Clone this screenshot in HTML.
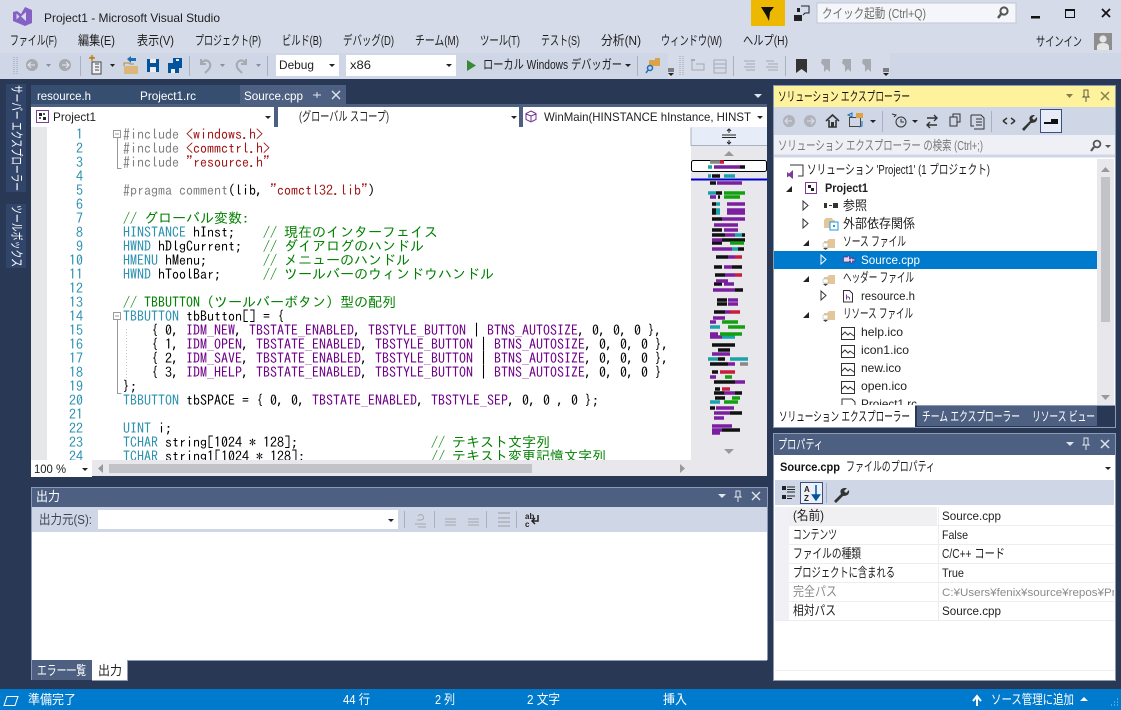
<!DOCTYPE html>
<html lang="ja"><head><meta charset="utf-8"><title>Project1 - Microsoft Visual Studio</title>
<style>
html,body{margin:0;padding:0;background:#293955;overflow:hidden}
svg{display:block}
text{white-space:pre}
.u{font-family:"Liberation Sans","Noto Sans CJK JP",sans-serif;font-size:12px;fill:#1e1e1e}
.j{font-size:13px}
.c{font-family:"IPAGothic","Liberation Mono",monospace;font-size:14px;fill:#000}
.n{fill:#2B91AF;text-anchor:end}
.t{fill:#2B91AF}.m{fill:#6F008A}.g{fill:#008000}.s{fill:#A31515}.p{fill:#808080}
.w{fill:#fff}.d{fill:#8a8f9c}
</style></head><body>
<svg width="1121" height="710" viewBox="0 0 1121 710" xmlns="http://www.w3.org/2000/svg">
<!-- chrome -->
<rect width="1121" height="710" fill="#293955"/>
<rect width="1121" height="79" fill="#D6DBE9"/>
<rect y="53" width="1121" height="26" fill="#CFD6E5"/>
<!-- VS logo -->
<path d="M25 7l7 3v13l-7 3-12-5v-9l4-1 4 3z" fill="#8661C5"/>
<path d="M16.500 13.500v6l3-3zM26 12l-5 4.500 5 4.500z" fill="#D6DBE9"/>
<text class="u" x="44" y="22" textLength="176" lengthAdjust="spacingAndGlyphs">Project1 - Microsoft Visual Studio</text>
<!-- notification -->
<rect x="751" y="0" width="34" height="26" fill="#EDB800"/>
<path d="M761 7h13l-4 5-1 9-3-6z" fill="#111"/>
<path d="M794 15h8v6h-8zM797 8h3v4h-3z" fill="#222"/><path d="M801 6h8v7h-4l-2 2" fill="none" stroke="#222"/>
<rect x="817" y="3" width="199" height="20" fill="#F4F6FA" stroke="#C0C7D6"/>
<text class="u j" x="822" y="18" textLength="104" lengthAdjust="spacingAndGlyphs" style="fill:#6d6d6d">クイック起動 (Ctrl+Q)</text>
<circle cx="1004" cy="11" r="3.6" fill="none" stroke="#555" stroke-width="2"/><path d="M1001 14l-3 4" stroke="#555" stroke-width="2.4"/>
<rect x="1031" y="16" width="9" height="2.5" fill="#111"/>
<rect x="1065.5" y="9.5" width="9" height="8" fill="none" stroke="#111"/><rect x="1065" y="9" width="10" height="2" fill="#111"/>
<path d="M1102 9l8 8M1110 9l-8 8" stroke="#111" stroke-width="1.7"/>
<!-- menu -->
<g>
<text class="u j" x="10" y="45" textLength="47" lengthAdjust="spacingAndGlyphs">ファイル(F)</text>
<text class="u j" x="78" y="45" textLength="37" lengthAdjust="spacingAndGlyphs">編集(E)</text>
<text class="u j" x="137" y="45" textLength="37" lengthAdjust="spacingAndGlyphs">表示(V)</text>
<text class="u j" x="195" y="45" textLength="66" lengthAdjust="spacingAndGlyphs">プロジェクト(P)</text>
<text class="u j" x="282" y="45" textLength="40" lengthAdjust="spacingAndGlyphs">ビルド(B)</text>
<text class="u j" x="343" y="45" textLength="51" lengthAdjust="spacingAndGlyphs">デバッグ(D)</text>
<text class="u j" x="415" y="45" textLength="44" lengthAdjust="spacingAndGlyphs">チーム(M)</text>
<text class="u j" x="480" y="45" textLength="40" lengthAdjust="spacingAndGlyphs">ツール(T)</text>
<text class="u j" x="541" y="45" textLength="39" lengthAdjust="spacingAndGlyphs">テスト(S)</text>
<text class="u j" x="601" y="45" textLength="40" lengthAdjust="spacingAndGlyphs">分析(N)</text>
<text class="u j" x="661" y="45" textLength="61" lengthAdjust="spacingAndGlyphs">ウィンドウ(W)</text>
<text class="u j" x="743" y="45" textLength="45" lengthAdjust="spacingAndGlyphs">ヘルプ(H)</text>
<text class="u j" x="1036" y="46" textLength="46" lengthAdjust="spacingAndGlyphs">サインイン</text>
</g>
<rect x="1094" y="33" width="18" height="17" fill="#8e8e8e"/><circle cx="1103" cy="39" r="3.6" fill="#e6e6e6"/><path d="M1097 50v-4q1-3 6-3t6 3v4z" fill="#e6e6e6"/>
<!-- toolbar -->
<path d="M14 57v18M17 57v18" stroke="#9aa1b3" stroke-width="1" stroke-dasharray="1 1"/>
<circle cx="32" cy="65" r="6" fill="#a6a9b0"/><path d="M35 65h-6M31 62l-3 3 3 3" fill="none" stroke="#e8eaf0"/>
<path d="M46 64h5l-2.500 3z" fill="#8b8f99"/>
<circle cx="65" cy="65" r="6" fill="#a6a9b0"/><path d="M62 65h6M66 62l3 3-3 3" fill="none" stroke="#e8eaf0"/>
<path d="M80.500 56v20" stroke="#a9b0c0"/>
<rect x="92" y="62" width="9" height="12" fill="#eef0f5" stroke="#444"/><path d="M95 64h4M95 67h4M95 70h4" stroke="#444"/><path d="M90 57l2 2 2-2M92 55v6M89 58h6" stroke="#c8811a" stroke-width="1.400"/>
<path d="M110 64h5l-2.500 3z" fill="#222"/>
<path d="M124 66h14v8h-14z" fill="#DCB67A"/><path d="M124 66v-3h5l1 1h4" fill="none" stroke="#b58a45"/><path d="M127 59l4-3v2h5v3h-5v2z" fill="#1c6fb5"/>
<path d="M147 59h12v13h-12z" fill="#00539C"/><rect x="150" y="59" width="6" height="4" fill="#eee"/><rect x="150" y="67" width="6" height="5" fill="#eee"/>
<path d="M168 63h11v10h-11z" fill="#00539C"/><path d="M173 58h9v10h-3v-5h-6z" fill="#00539C"/><rect x="171" y="69" width="4" height="4" fill="#eee"/><rect x="176" y="59" width="3" height="2" fill="#eee"/>
<path d="M189.500 56v20" stroke="#a9b0c0"/>
<path d="M201 59v5h5M201 64q3-5 7-3 4 3 1 8l-4 4" fill="none" stroke="#a6a9b0" stroke-width="2"/>
<path d="M220 64h5l-2.500 3z" fill="#8b8f99"/>
<path d="M246 59v5h-5M246 64q-3-5-7-3-4 3-1 8l4 4" fill="none" stroke="#a6a9b0" stroke-width="2"/>
<path d="M256 64h5l-2.500 3z" fill="#8b8f99"/>
<path d="M267.500 56v20" stroke="#a9b0c0"/>
<rect x="276" y="55" width="63" height="21" fill="#fff"/>
<text class="u" x="279" y="69" textLength="35" lengthAdjust="spacingAndGlyphs">Debug</text>
<path d="M329 64h6l-3 3z" fill="#222"/>
<rect x="346" y="55" width="110" height="21" fill="#fff"/>
<text class="u" x="350" y="69" textLength="21" lengthAdjust="spacingAndGlyphs">x86</text>
<path d="M446 64h6l-3 3z" fill="#222"/>
<path d="M467 60l9 5.500-9 5.500z" fill="#388A34"/>
<text class="u j" x="483" y="69" textLength="139" lengthAdjust="spacingAndGlyphs">ローカル Windows デバッガー</text>
<path d="M625 64h6l-3 3z" fill="#222"/>
<path d="M637.500 56v20" stroke="#a9b0c0"/>
<path d="M649 60h6v-2h5v8h-11z" fill="#DCA24A"/><circle cx="650" cy="68" r="2.500" fill="none" stroke="#1c6fb5" stroke-width="1.500"/><path d="M648 70l-2 3" stroke="#1c6fb5" stroke-width="1.500"/>
<rect x="668" y="53" width="222" height="26" fill="#D6DBE9"/>
<path d="M668 69h6M668 71h6" stroke="#222"/><path d="M668 73h6l-3 3z" fill="#222"/>
<path d="M680 56v20M683 56v20" stroke="#9aa1b3" stroke-dasharray="1 1"/>
<path d="M692 60v10h12v-6h-8" fill="none" stroke="#a6a9b0"/><path d="M691 60l4 0" stroke="#a6a9b0" stroke-width="2"/>
<path d="M714 60h12v13h-12zM714 64h12M714 68h12" fill="none" stroke="#a6a9b0"/>
<path d="M733.500 56v20" stroke="#a9b0c0"/>
<path d="M744 61h11M746 64h9M744 67h11M746 70h9" stroke="#a6a9b0"/>
<path d="M766 61h8M768 64h10M766 67h12M768 70h10" stroke="#a6a9b0"/>
<path d="M785.500 56v20" stroke="#a9b0c0"/>
<path d="M796 59h11v14l-5.500-4-5.500 4z" fill="#333"/>
<path d="M822 59h8v13l-3-3-3 3v-6l-3-3z" fill="#a6a9b0"/>
<path d="M843 59h8v13l-3-3-3 3v-6l-3-3z" fill="#a6a9b0"/>
<path d="M863 59h8v13l-3-3-3 3v-6l-3-3z" fill="#a6a9b0"/>
<path d="M883 69h6M883 71h6" stroke="#222"/><path d="M883 73h6l-3 3z" fill="#222"/>

<!-- left vertical tabs -->
<rect x="6" y="84" width="20" height="108" fill="#31456A"/>
<rect x="6" y="204" width="20" height="64" fill="#31456A"/>
<text class="u j w" transform="translate(12,85) rotate(90)" textLength="106" lengthAdjust="spacingAndGlyphs">サーバー エクスプローラー</text>
<text class="u j w" transform="translate(12,205) rotate(90)" textLength="62" lengthAdjust="spacingAndGlyphs">ツールボックス</text>

<!-- editor tabs -->
<rect x="31" y="85" width="209" height="19" fill="#364E6F"/>
<rect x="240" y="85" width="106" height="19" fill="#4D6082"/>
<rect x="31" y="104" width="736" height="23" fill="#4D6082"/>
<text class="u" x="37" y="100" textLength="54" lengthAdjust="spacingAndGlyphs" style="fill:#fff">resource.h</text>
<text class="u w" x="140" y="100" textLength="56" lengthAdjust="spacingAndGlyphs">Project1.rc</text>
<text class="u w" x="244" y="100" textLength="59" lengthAdjust="spacingAndGlyphs">Source.cpp</text>
<path d="M313 95h4M317 92v6M317 95h4" stroke="#dfe4ee" fill="none"/>
<path d="M332 91l8 8M340 91l-8 8" stroke="#dfe4ee" stroke-width="1.400"/>
<path d="M754 94h8l-4 4z" fill="#dfe4ee"/>
<rect x="31" y="107" width="243" height="20" fill="#fff"/>
<rect x="278" y="107" width="241" height="20" fill="#fff"/>
<rect x="523" y="107" width="244" height="20" fill="#fff"/>
<rect x="36.500" y="110.500" width="12" height="12" fill="#fff" stroke="#7d3c98"/><path d="M39 113h3v3h-3zM43 117h3v3h-3z" fill="#222"/><path d="M43 113h2v2h-2zM39 117h2v2h-2z" fill="#555"/>
<text class="u" x="53" y="121" textLength="43" lengthAdjust="spacingAndGlyphs">Project1</text>
<path d="M265 116h6l-3 3z" fill="#222"/>
<text class="u j" x="299" y="121" textLength="90" lengthAdjust="spacingAndGlyphs">(グローバル スコープ)</text>
<path d="M511 116h6l-3 3z" fill="#222"/>
<path d="M531 111l5 2.500v6l-5 2.500-5-2.500v-6z" fill="none" stroke="#6F2C91"/><path d="M526 114l5 2 5-2M531 116v5" fill="none" stroke="#6F2C91"/>
<text class="u" x="544" y="121" textLength="207" lengthAdjust="spacingAndGlyphs">WinMain(HINSTANCE hInstance, HINST</text>
<path d="M757 116h6l-3 3z" fill="#222"/>

<!-- editor -->
<rect x="31" y="127" width="660" height="333" fill="#fff"/>
<rect x="31" y="127" width="16" height="333" fill="#E6E7E8"/>
<g>
<text class="c n" x="83" y="139">1</text><text class="c n" x="83" y="153">2</text><text class="c n" x="83" y="167">3</text><text class="c n" x="83" y="181">4</text><text class="c n" x="83" y="195">5</text><text class="c n" x="83" y="209">6</text><text class="c n" x="83" y="223">7</text><text class="c n" x="83" y="237">8</text><text class="c n" x="83" y="251">9</text><text class="c n" x="83" y="265">10</text><text class="c n" x="83" y="279">11</text><text class="c n" x="83" y="293">12</text><text class="c n" x="83" y="307">13</text><text class="c n" x="83" y="321">14</text><text class="c n" x="83" y="335">15</text><text class="c n" x="83" y="349">16</text><text class="c n" x="83" y="363">17</text><text class="c n" x="83" y="377">18</text><text class="c n" x="83" y="391">19</text><text class="c n" x="83" y="405">20</text><text class="c n" x="83" y="419">21</text><text class="c n" x="83" y="433">22</text><text class="c n" x="83" y="447">23</text>
</g>
<!-- outline -->
<g fill="none" stroke="#9a9a9a">
<rect x="113.500" y="130.500" width="7" height="7" fill="#fff"/><path d="M115 134h4"/>
<path d="M117.500 138v30.500h4"/>
<rect x="113.500" y="312.500" width="7" height="7" fill="#fff"/><path d="M115 316h4"/>
<path d="M117.500 320v73.500h4"/>
</g>
<path d="M126.500 329v56" stroke="#c8c8c8" stroke-dasharray="1 2"/>
<svg x="31" y="127" width="660" height="333" viewBox="31 127 660 333">
<text class="c" x="123" y="139"><tspan class="p">#include </tspan><tspan class="s">&lt;windows.h&gt;</tspan></text>
<text class="c" x="123" y="153"><tspan class="p">#include </tspan><tspan class="s">&lt;commctrl.h&gt;</tspan></text>
<text class="c" x="123" y="167"><tspan class="p">#include </tspan><tspan class="s">"resource.h"</tspan></text>
<text class="c" x="123" y="195"><tspan class="p">#pragma comment</tspan>(lib, <tspan class="s">"comctl32.lib"</tspan>)</text>
<text class="c g" x="123" y="223">// グローバル変数:</text>
<text class="c" x="123" y="237"><tspan class="t">HINSTANCE</tspan> hInst;    <tspan class="g">// 現在のインターフェイス</tspan></text>
<text class="c" x="123" y="251"><tspan class="t">HWND</tspan> hDlgCurrent;   <tspan class="g">// ダイアログのハンドル</tspan></text>
<text class="c" x="123" y="265"><tspan class="t">HMENU</tspan> hMenu;        <tspan class="g">// メニューのハンドル</tspan></text>
<text class="c" x="123" y="279"><tspan class="t">HWND</tspan> hToolBar;      <tspan class="g">// ツールバーのウィンドウハンドル</tspan></text>
<text class="c g" x="123" y="307">// TBBUTTON（ツールバーボタン）型の配列</text>
<text class="c" x="123" y="321"><tspan class="t">TBBUTTON</tspan> tbButton[] = {</text>
<text class="c" x="123" y="335">    { 0, <tspan class="m">IDM_NEW</tspan>, <tspan class="m">TBSTATE_ENABLED</tspan>, <tspan class="m">TBSTYLE_BUTTON</tspan> | <tspan class="m">BTNS_AUTOSIZE</tspan>, 0, 0, 0 },</text>
<text class="c" x="123" y="349">    { 1, <tspan class="m">IDM_OPEN</tspan>, <tspan class="m">TBSTATE_ENABLED</tspan>, <tspan class="m">TBSTYLE_BUTTON</tspan> | <tspan class="m">BTNS_AUTOSIZE</tspan>, 0, 0, 0 },</text>
<text class="c" x="123" y="363">    { 2, <tspan class="m">IDM_SAVE</tspan>, <tspan class="m">TBSTATE_ENABLED</tspan>, <tspan class="m">TBSTYLE_BUTTON</tspan> | <tspan class="m">BTNS_AUTOSIZE</tspan>, 0, 0, 0 },</text>
<text class="c" x="123" y="377">    { 3, <tspan class="m">IDM_HELP</tspan>, <tspan class="m">TBSTATE_ENABLED</tspan>, <tspan class="m">TBSTYLE_BUTTON</tspan> | <tspan class="m">BTNS_AUTOSIZE</tspan>, 0, 0, 0 }</text>
<text class="c" x="123" y="391">};</text>
<text class="c" x="123" y="405"><tspan class="t">TBBUTTON</tspan> tbSPACE = { 0, 0, <tspan class="m">TBSTATE_ENABLED</tspan>, <tspan class="m">TBSTYLE_SEP</tspan>, 0, 0 , 0 };</text>
<text class="c" x="123" y="433"><tspan class="t">UINT</tspan> i;</text>
<text class="c" x="123" y="447"><tspan class="t">TCHAR</tspan> string[1024 * 128];                   <tspan class="g">// テキスト文字列</tspan></text>
<text class="c" x="123" y="461"><tspan class="t">TCHAR</tspan> string1[1024 * 128];                  <tspan class="g">// テキスト変更記憶文字列</tspan></text>
<text class="c n" x="83" y="461">24</text>
</svg>
<!-- hscroll -->
<rect x="31" y="460" width="736" height="16" fill="#E8E8EC"/>
<rect x="31" y="460" width="61" height="17" fill="#fff"/>
<text class="u" x="34" y="473" textLength="32" lengthAdjust="spacingAndGlyphs">100 %</text>
<path d="M82 468h6l-3 3z" fill="#222"/>
<path d="M103 464v9l-5-4.500z" fill="#999"/>
<rect x="109" y="464" width="423" height="9" fill="#C2C3C9"/>
<path d="M680 464v9l5-4.500z" fill="#999"/>
<!-- minimap -->
<rect x="691" y="127" width="76" height="349" fill="#E8E8EC"/>
<rect x="691" y="127" width="76" height="18" fill="#E6ECF8"/>
<path d="M691 127.500v18h76" fill="none" stroke="#A8B0C2"/>
<path d="M722 135h14M722 137.500h14" stroke="#222"/><path d="M729 129v4M729 140v4M727 131l2-2 2 2M727 142l2 2 2-2" fill="none" stroke="#222"/>
<path d="M724 156l5-5 5 5z" fill="#999"/><path d="M724 449l5 5 5-5z" fill="#999"/>
<rect x="691.500" y="160.500" width="75" height="11" rx="2" fill="#fff" stroke="#000"/>
<g fill="none" stroke-width="3.500">
<path stroke="#111" d="M740 167h5M712 176h8M710 183h6M716 193h6M718 197h2M712 204h4M712 210h4M712 213h4M712 219h10M712 230h10M712 235h13M742 235h3M722 240h23M712 243h10M738 249h6M716 257h12M714 267h8M732 267h10M715 275h10M714 284h8M735 290h8M717 300h10M717 304h10M714 312h11M712 345h23M718 350h12M718 359h7M710 364h18M712 372h6M714 382h21M715 389h5M714 393h11M735 393h7M715 398h10M710 408h5M730 413h12M722 430h18"/>
<path stroke="#7a1fa0" d="M714 167h26M717 183h25M710 197h6M727 204h18M727 210h18M727 213h18M722 219h23M714 225h24M724 230h14M725 235h10M712 240h10M712 249h13M725 249h7M728 257h7M724 267h8M725 275h10M716 281h12M724 284h10M713 290h22M728 300h10M728 304h10M725 312h5M713 318h12M710 322h6M710 334h8M710 337h12M712 354h18M728 364h7M710 377h6M735 382h10M724 393h11M716 408h18M714 413h16M714 418h10M712 426h20M712 430h10M712 433h8"/>
<path stroke="#1aa3a8" d="M708 167h4M708 176h3M724 176h11M708 193h8M716 204h4M716 210h4M716 213h4M735 235h7M732 249h6M710 327h10M722 337h13M708 359h10M730 359h18M710 402h10"/>
<path stroke="#12a012" d="M724 193h21M724 197h16M730 243h14M722 322h16M728 327h17M720 334h22M725 377h7M732 398h8M724 402h14"/>
<path stroke="#c81e3c" d="M720 162h4M735 257h7M735 275h7M730 312h10M720 372h15M722 389h8"/>
<path stroke="#888" d="M710 162h10M740 364h8"/>
</g>
<path d="M691 179.500h76" stroke="#0000CD" stroke-width="2"/>

<!-- output panel -->
<rect x="31" y="487" width="736" height="20" fill="#4D6082"/>
<path d="M31.500 487v193" stroke="#8C9AB5"/><path d="M31 487.500h736" stroke="#8C9AB5"/>
<text class="u j w" x="36" y="501" textLength="24" lengthAdjust="spacingAndGlyphs">出力</text>
<path d="M718 494h8l-4 4z" fill="#dfe4ee"/>
<path d="M736 491h4v5l1 1h-6l1-1zM738 497v5" fill="none" stroke="#dfe4ee"/>
<path d="M752 492l8 8M760 492l-8 8" stroke="#dfe4ee" stroke-width="1.400"/>
<rect x="32" y="507" width="735" height="25" fill="#CFD6E5"/>
<text class="u j" x="39" y="524" textLength="53" lengthAdjust="spacingAndGlyphs" style="fill:#3c4658">出力元(S):</text>
<rect x="98" y="510" width="300" height="19" fill="#fff"/>
<path d="M388 519h6l-3 3z" fill="#222"/>
<g stroke="#a9b0c0"><path d="M404.500 511v17M434.500 511v17M486.500 511v17M516.500 511v17"/></g>
<g stroke="#a6a9b0" fill="none"><path d="M415 524h11M418 527h8M418 516q3-3 5 0t-2 4h-4"/>
<path d="M445 519h11M445 522h11M445 525h11"/><path d="M468 519h11M468 522h11M468 525h11"/>
<path d="M498 513h12M498 518h12M498 522h12M498 526h12" stroke-width="1.300"/></g>
<text style="font:bold 8px 'Liberation Sans';fill:#222" x="525" y="519">ab</text>
<text style="font:bold 8px 'Liberation Sans';fill:#222" x="525" y="527">c</text>
<path d="M538 515v6h-6M535 518l-3 3 3 3" fill="none" stroke="#222" stroke-width="1.500"/>
<rect x="32" y="532" width="735" height="128" fill="#fff"/>
<rect x="32" y="660" width="60" height="20" fill="#4D6082"/>
<text class="u j w" x="37" y="675" textLength="49" lengthAdjust="spacingAndGlyphs">エラー一覧</text>
<rect x="92" y="660" width="36" height="20" fill="#fff"/>
<path d="M127.500 660v20.500H92" fill="none" stroke="#8C9AB5"/><path d="M128 660.500h639" stroke="#8C9AB5"/><path d="M767.500 487v173" stroke="#8C9AB5"/>
<text class="u j" x="98" y="675" textLength="24" lengthAdjust="spacingAndGlyphs">出力</text>

<!-- solution explorer -->
<rect x="773.500" y="85.500" width="342" height="342" fill="#fff" stroke="#8C9AB5"/>
<rect x="774" y="86" width="341" height="21" fill="#FFF29D"/>
<text class="u j" x="778" y="101" textLength="132" lengthAdjust="spacingAndGlyphs" style="fill:#111">ソリューション エクスプローラー</text>
<path d="M1066 94h7l-3.500 4z" fill="#857f4d"/>
<path d="M1084 90h4v6l1 1h-6l1-1zM1086 97v5" fill="none" stroke="#5c5a3a"/>
<path d="M1101 92l8 8M1109 92l-8 8" stroke="#857f4d" stroke-width="1.500"/>
<rect x="774" y="107" width="341" height="28" fill="#CFD6E5"/>
<circle cx="789" cy="121" r="6" fill="#b0b3bb"/><circle cx="810" cy="121" r="6" fill="#b0b3bb"/>
<path d="M792 121h-6M788 118l-3 3 3 3M807 121h6M811 118l3 3-3 3" fill="none" stroke="#dfe2ea"/>
<path d="M826 121l6.500-6 6.500 6M829 120v7h7v-7" fill="none" stroke="#333" stroke-width="1.600"/><rect x="831" y="122" width="3" height="5" fill="#333"/>
<rect x="849.500" y="117.500" width="11" height="9" fill="none" stroke="#444"/><path d="M856 113h7v5h-7z" fill="#DCA24A"/><path d="M848 115l4-2v4zM862 121v5l-3 1" fill="none" stroke="#1c6fb5"/>
<path d="M870 120h6l-3 3z" fill="#222"/>
<path d="M882.500 111v21" stroke="#a9b0c0"/>
<circle cx="901" cy="122" r="5" fill="none" stroke="#333"/><path d="M901 119v3h3M892 114l4 1-2 2" fill="none" stroke="#333"/>
<path d="M912 120h6l-3 3z" fill="#222"/>
<path d="M927 118h10M934 115l3 3-3 3M937 125h-10M930 122l-3 3 3 3" fill="none" stroke="#333" stroke-width="1.400"/>
<path d="M950 117h7v9h-7zM953 117v-3h7v8h-3" fill="none" stroke="#333"/>
<path d="M971 115h10l3 3v11h-10" fill="none" stroke="#333"/><path d="M971 115v11h3M976 119h6M976 122h6M976 125h6" fill="none" stroke="#333"/>
<path d="M991.500 111v21" stroke="#a9b0c0"/>
<path d="M1003 121l4-3M1003 121l4 3M1015 121l-4-3M1015 121l-4 3" stroke="#333" stroke-width="1.500"/>
<path d="M1022 129l8-8q-2-5 3-6l2 0-3 3 2 2 3-3q1 6-6 6l-7 8z" fill="#333"/>
<rect x="1040.500" y="109.500" width="21" height="23" fill="#E8ECF6" stroke="#3B4F81"/>
<rect x="1044" y="122" width="14" height="2" fill="#111"/><rect x="1051" y="119" width="7" height="3" fill="#111"/>
<rect x="774" y="135" width="341" height="20" fill="#EEF0F6"/>
<text class="u j" x="778" y="150" textLength="205" lengthAdjust="spacingAndGlyphs" style="fill:#777">ソリューション エクスプローラー の検索 (Ctrl+;)</text>
<circle cx="1097" cy="144" r="3.400" fill="none" stroke="#555" stroke-width="1.800"/><path d="M1094 147l-3 4" stroke="#555" stroke-width="2.200"/>
<path d="M1105 145h6l-3 3z" fill="#555"/>
<path d="M774 156h341" stroke="#CFD6E5" stroke-width="3"/>
<rect x="1097" y="159" width="17" height="246" fill="#E8E8EC"/>
<rect x="1101" y="177" width="9" height="145" fill="#C2C3C9"/>
<path d="M1101 172l4.500-5 4.500 5z" fill="#999"/><path d="M1101 395l4.500 5 4.500-5z" fill="#999"/>
<rect x="774" y="251" width="323" height="18" fill="#007ACC"/>
<svg x="774" y="158" width="323" height="247" viewBox="774 158 323 247">
<text class="u j" x="807" y="174" textLength="183" lengthAdjust="spacingAndGlyphs">ソリューション 'Project1' (1 プロジェクト)</text>
<text class="u" x="825" y="192" textLength="43" lengthAdjust="spacingAndGlyphs" style="font-weight:bold">Project1</text>
<text class="u j" x="843" y="210" textLength="24" lengthAdjust="spacingAndGlyphs">参照</text>
<text class="u j" x="843" y="228" textLength="72" lengthAdjust="spacingAndGlyphs">外部依存関係</text>
<text class="u j" x="843" y="246" textLength="63" lengthAdjust="spacingAndGlyphs">ソース ファイル</text>
<text class="u w" x="861" y="264" textLength="59" lengthAdjust="spacingAndGlyphs">Source.cpp</text>
<text class="u j" x="843" y="282" textLength="71" lengthAdjust="spacingAndGlyphs">ヘッダー ファイル</text>
<text class="u" x="861" y="300" textLength="54" lengthAdjust="spacingAndGlyphs">resource.h</text>
<text class="u j" x="843" y="318" textLength="70" lengthAdjust="spacingAndGlyphs">リソース ファイル</text>
<text class="u" x="861" y="336" textLength="42" lengthAdjust="spacingAndGlyphs">help.ico</text>
<text class="u" x="861" y="354" textLength="48" lengthAdjust="spacingAndGlyphs">icon1.ico</text>
<text class="u" x="861" y="372" textLength="40" lengthAdjust="spacingAndGlyphs">new.ico</text>
<text class="u" x="861" y="390" textLength="46" lengthAdjust="spacingAndGlyphs">open.ico</text>
<text class="u" x="861" y="408" textLength="56" lengthAdjust="spacingAndGlyphs">Project1.rc</text>
<!-- tree icons -->
<path d="M790 165h13v11h-5" fill="none" stroke="#333"/><path d="M787 172l2 1.500 4-3.500v9l-4-3-2 1.500z" fill="#7D3C98"/>
<path d="M786 192l6-6v6z" fill="#222"/>
<rect x="805.500" y="182.500" width="11" height="11" fill="#fff" stroke="#7D3C98"/><path d="M808 185h3v3h-3zM811 188h3v3h-3z" fill="#222"/>
<path d="M803 201l5 4.500-5 4.500zM803 219l5 4.500-5 4.500z" fill="#fff" stroke="#333"/>
<path d="M824 203h3v5h-3zM829 205h3v1h-3zM833 203h5v5h-5z" fill="#333"/>
<path d="M824 220h11v8h-11z" fill="#E3C79A"/><path d="M824 220l2-2h6l1 2" fill="#E3C79A"/><rect x="830" y="222" width="8" height="8" fill="#fff" stroke="#1c97ea"/><rect x="833" y="225" width="2" height="2" fill="#1c97ea"/>
<path d="M803 246l6-6v6zM803 282l6-6v6zM803 318l6-6v6z" fill="#222"/>
<path d="M824 241h3l2-2h6v9h-11z" fill="#E3C79A"/><path d="M823 243h5v4h-5z" fill="#fff" stroke="#aaa" stroke-width=".5"/><path d="M823 248h5l-2.500 2z" fill="#444"/>
<path d="M824 277h3l2-2h6v9h-11z" fill="#E3C79A"/><path d="M823 279h5v4h-5z" fill="#fff" stroke="#aaa" stroke-width=".5"/><path d="M823 284h5l-2.500 2z" fill="#444"/>
<path d="M824 313h3l2-2h6v9h-11z" fill="#E3C79A"/><path d="M823 315h5v4h-5z" fill="#fff" stroke="#aaa" stroke-width=".5"/><path d="M823 320h5l-2.500 2z" fill="#444"/>
<path d="M821 255l5 4.500-5 4.500z" fill="#007ACC" stroke="#fff"/>
<path d="M821 291l5 4.500-5 4.500z" fill="#fff" stroke="#333"/>
<path d="M843.500 257h4v-1h2v3h1v-1h2v1h2.500v2h-2.500v2h-2v-2h-1v1h-6z" fill="#E6D6F0" stroke="#5B2C83" stroke-width=".7"/>
<path d="M843.500 290.500h6l3 3v8.500h-9z" fill="#fff" stroke="#333"/><path d="M846.500 294.500v5M846.500 297h2l1 1v1.500" fill="none" stroke="#7D3C98"/>
<g fill="none" stroke="#333"><rect x="841.500" y="327.500" width="13" height="12"/><rect x="841.500" y="345.500" width="13" height="12"/><rect x="841.500" y="363.500" width="13" height="12"/><rect x="841.500" y="381.500" width="13" height="12"/>
<path d="M842 335l3-3 3 3 2-2 4 3M842 353l3-3 3 3 2-2 4 3M842 371l3-3 3 3 2-2 4 3M842 389l3-3 3 3 2-2 4 3"/>
<path d="M842 399h10l3 3v5h-13z" fill="#fff"/></g>
</svg>
<rect x="774" y="405" width="341" height="22" fill="#293955"/>
<rect x="774" y="405" width="141" height="22" fill="#fff"/>
<path d="M915 405.500h200" stroke="#8C9AB5"/><path d="M1115.500 405v1" stroke="#8C9AB5"/>
<rect x="917" y="406" width="180" height="20" fill="#4D6082"/>
<text class="u j" x="779" y="421" textLength="131" lengthAdjust="spacingAndGlyphs" style="fill:#111">ソリューション エクスプローラー</text>
<text class="u j w" x="922" y="421" textLength="98" lengthAdjust="spacingAndGlyphs">チーム エクスプローラー</text>
<text class="u j w" x="1032" y="421" textLength="63" lengthAdjust="spacingAndGlyphs">リソース ビュー</text>

<!-- properties -->
<rect x="773.500" y="433.500" width="342" height="247" fill="#fff" stroke="#8C9AB5"/>
<rect x="774" y="434" width="341" height="21" fill="#4D6082"/>
<text class="u j w" x="778" y="449" textLength="45" lengthAdjust="spacingAndGlyphs">プロパティ</text>
<path d="M1066 442h8l-4 4z" fill="#dfe4ee"/>
<path d="M1084 438h4v6l1 1h-6l1-1zM1086 445v5" fill="none" stroke="#dfe4ee"/>
<path d="M1101 440l8 8M1109 440l-8 8" stroke="#dfe4ee" stroke-width="1.500"/>
<text class="u" x="780" y="471" textLength="60" lengthAdjust="spacingAndGlyphs" style="font-weight:bold;fill:#111">Source.cpp</text>
<text class="u j" x="846" y="471" textLength="89" lengthAdjust="spacingAndGlyphs">ファイルのプロパティ</text>
<path d="M1105 467h6l-3 3z" fill="#222"/>
<rect x="775" y="480" width="339" height="25" fill="#CFD6E5"/>
<g fill="#222"><path d="M782 486h4v4h-4zM782 495h4v4h-4z"/></g><path d="M787 487h8M787 489.500h8M787 492h8M787 496h8M787 498.500h5" stroke="#222"/>
<rect x="800.500" y="482.500" width="22" height="21" fill="#EDF0F7" stroke="#3B4F81"/>
<text x="804" y="492" style="font:bold 8px 'Liberation Sans';fill:#222">A</text><text x="804" y="501" style="font:bold 8px 'Liberation Sans';fill:#222">Z</text>
<path d="M816 485v13M812.500 495l3.500 5 3.500-5z" stroke="#00539C" fill="#00539C" stroke-width="1.500"/>
<path d="M826.500 483v20" stroke="#a9b0c0"/>
<path d="M834 501l7-7q-2-5 3-6l3 0-3 3 2 2 3-3q1 6-6 6l-7 7z" fill="#333"/>
<rect x="775" y="507" width="14" height="114" fill="#F0F0F5"/>
<rect x="789" y="507" width="148" height="19" fill="#F0F0F2"/>
<g stroke="#ECEDF0"><path d="M789 525.500h325M789 544.500h325M789 563.500h325M789 582.500h325M789 601.500h325M775 620.500h339M775 670.500h339M938.500 507v114"/></g>
<g>
<text class="u j" x="793" y="520" textLength="31" lengthAdjust="spacingAndGlyphs">(名前)</text>
<text class="u j" x="793" y="539" textLength="44" lengthAdjust="spacingAndGlyphs">コンテンツ</text>
<text class="u j" x="793" y="558" textLength="68" lengthAdjust="spacingAndGlyphs">ファイルの種類</text>
<text class="u j" x="793" y="577" textLength="102" lengthAdjust="spacingAndGlyphs">プロジェクトに含まれる</text>
<text class="u j" x="793" y="596" textLength="44" lengthAdjust="spacingAndGlyphs" style="fill:#8a8a8a">完全パス</text>
<text class="u j" x="793" y="615" textLength="43" lengthAdjust="spacingAndGlyphs">相対パス</text>
<text class="u" x="942" y="520" textLength="59" lengthAdjust="spacingAndGlyphs">Source.cpp</text>
<text class="u" x="942" y="539" textLength="26" lengthAdjust="spacingAndGlyphs">False</text>
<text class="u j" x="942" y="558" textLength="63" lengthAdjust="spacingAndGlyphs">C/C++ コード</text>
<text class="u" x="942" y="577" textLength="22" lengthAdjust="spacingAndGlyphs">True</text>
<svg x="940" y="584" width="174" height="18" viewBox="940 584 174 18"><text class="u" x="942" y="596" textLength="180" lengthAdjust="spacingAndGlyphs" style="fill:#8a8a8a;font-size:11px">C:¥Users¥fenix¥source¥repos¥Pro</text></svg>
<text class="u" x="942" y="615" textLength="59" lengthAdjust="spacingAndGlyphs">Source.cpp</text>
</g>

<!-- status bar -->
<rect y="689" width="1121" height="21" fill="#007ACC"/>
<path d="M7 696.500h11l-3 9H4z" fill="none" stroke="#fff"/>
<text class="u j w" x="28" y="704" textLength="48" lengthAdjust="spacingAndGlyphs">準備完了</text>
<text class="u j w" x="343" y="704" textLength="27" lengthAdjust="spacingAndGlyphs">44 行</text>
<text class="u j w" x="435" y="704" textLength="20" lengthAdjust="spacingAndGlyphs">2 列</text>
<text class="u j w" x="527" y="704" textLength="33" lengthAdjust="spacingAndGlyphs">2 文字</text>
<text class="u j w" x="663" y="704" textLength="24" lengthAdjust="spacingAndGlyphs">挿入</text>
<path d="M977 706v-9M973 701l4-5 4 5" fill="none" stroke="#fff" stroke-width="2"/>
<text class="u j w" x="991" y="704" textLength="83" lengthAdjust="spacingAndGlyphs">ソース管理に追加</text>
<path d="M1080 701l4-4 4 4z" fill="#fff"/>
<path d="M1117 699h1M1114 702h1M1117 702h1M1111 705h1M1114 705h1M1117 705h1" stroke="#9fd0ef"/>
</svg>
</body></html>
